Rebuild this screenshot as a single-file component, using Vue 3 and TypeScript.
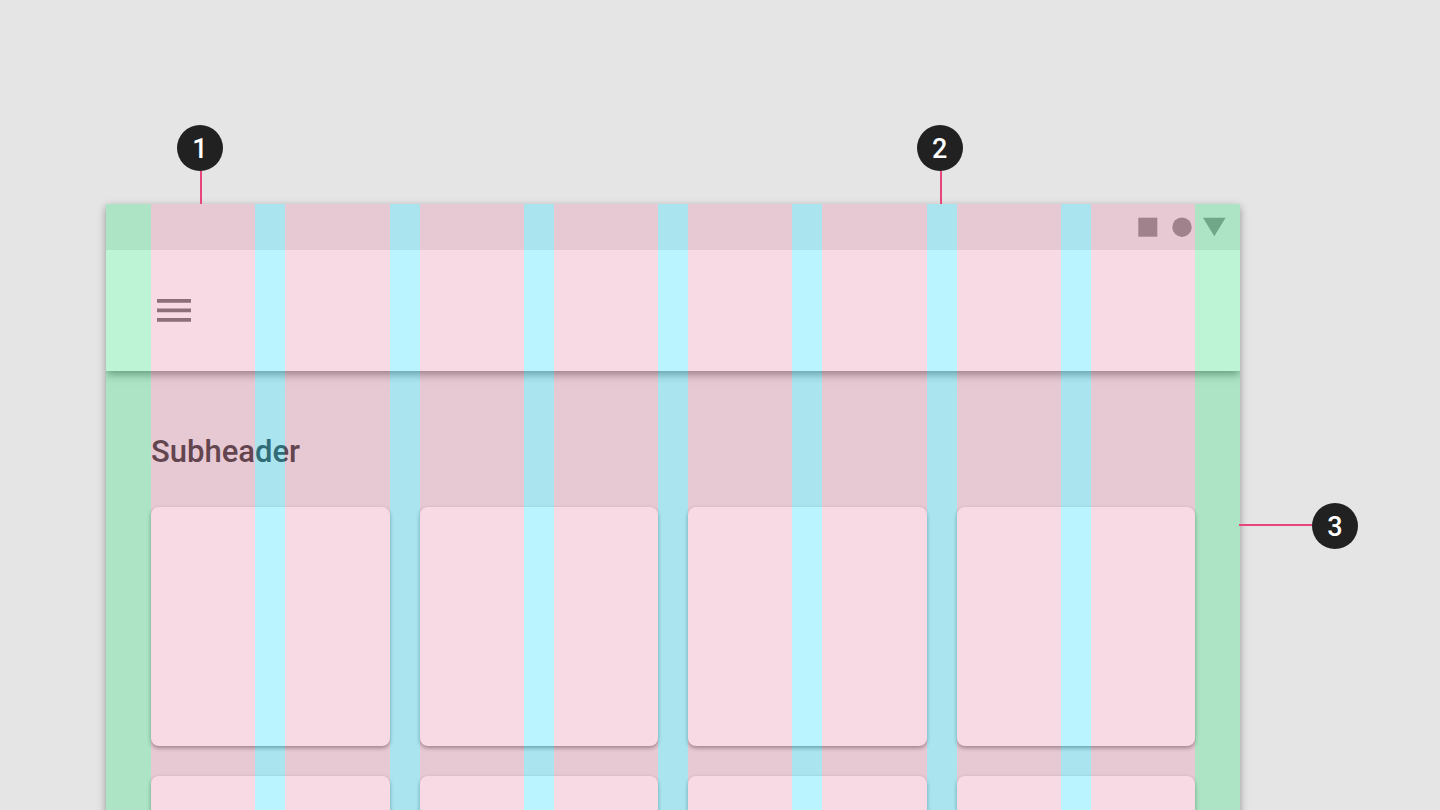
<script setup lang="ts">
interface Callout {
  id: number
  kind: 'over-column' | 'over-gutter' | 'beside-margin'
}

const callouts: Callout[] = [
  { id: 1, kind: 'over-column' },
  { id: 2, kind: 'over-gutter' },
  { id: 3, kind: 'beside-margin' },
]

const columnCount = 8
const cardCount = 8
</script>

<template>
  <div class="stage">
    <div class="device">
      <main class="screen">
        <header>
          <div class="status-bar">
            <svg class="status-icons" viewBox="0 0 88 20" aria-hidden="true">
              <path d="M0.3 0.7h19v19h-19z" />
              <circle cx="44" cy="10.2" r="9.7" />
              <path class="signal" d="M65 0.7h22.6L76.3 19.2z" />
            </svg>
          </div>
          <div class="app-bar">
            <button class="menu" type="button" aria-label="Menu">
              <svg viewBox="0 0 34 24" aria-hidden="true">
                <path d="M0 0h34v3.8H0zM0 9.5h34v3.8H0zM0 19h34v3.8H0z" />
              </svg>
            </button>
          </div>
        </header>
        <section class="content">
          <h2 class="subheader">Subheader</h2>
          <div class="cards">
            <article v-for="n in cardCount" :key="n" class="card"></article>
          </div>
        </section>
      </main>
      <div class="grid-overlay" aria-hidden="true">
        <div class="columns">
          <span v-for="n in columnCount" :key="n" class="column"></span>
        </div>
      </div>
      <div v-for="c in callouts" :key="c.id" class="callout" :class="c.kind">
        <span class="badge">{{ c.id }}</span>
        <span class="leader"></span>
      </div>
    </div>
  </div>
</template>

<style>
body {
  background: #e5e5e5;
}
</style>

<style scoped>
.stage {
  box-sizing: border-box;
  height: 100vh;
  min-height: 640px;
  overflow: hidden;
  padding: 204px 200px 0 106px;
  background: #e5e5e5;
  font-family: Roboto, "Liberation Sans", sans-serif;
}

.device {
  position: relative;
  box-shadow: 0 3px 8px rgba(0, 0, 0, 0.36);
}

.screen {
  background: #e7e7e7;
}

header {
  position: relative;
  box-shadow: 0 3px 9px rgba(0, 0, 0, 0.5);
  clip-path: inset(0 0 -24px 0);
}

.status-bar {
  display: flex;
  align-items: center;
  justify-content: flex-end;
  height: 46px;
  padding-right: 14px;
  background: #e7e7e7;
}

.status-icons {
  width: 88px;
  height: 20px;
  fill: #818181;
}

.signal {
  fill: #8a8a8a;
}

.app-bar {
  display: flex;
  align-items: center;
  height: 121px;
  padding: 0 45px;
  background: #fff;
}

.menu {
  display: flex;
  padding: 6px;
  border: 0;
  background: none;
  cursor: pointer;
}

.menu svg {
  width: 34px;
  height: 24px;
  fill: #666;
}

.content {
  padding: 60px 45px;
}

.subheader {
  margin: 0;
  padding-bottom: 34px;
  color: #2a2a2a;
  font-size: 31px;
  font-weight: 500;
  line-height: 42px;
}

.cards {
  display: grid;
  grid-template-columns: repeat(4, 1fr);
  gap: 30px;
}

.card {
  aspect-ratio: 1;
  border-radius: 8px;
  background: #fff;
  box-shadow: 0 2px 4px rgba(0, 0, 0, 0.45);
}

.grid-overlay {
  position: absolute;
  inset: 0;
  display: flex;
  pointer-events: none;
}

.grid-overlay::before,
.grid-overlay::after {
  content: "";
  width: 45px;
  background: rgba(61, 223, 134, 0.34);
}

.columns {
  flex: 1;
  display: grid;
  grid-template-columns: repeat(8, 1fr);
  gap: 30px;
}

.column {
  position: relative;
  background: rgba(232, 132, 165, 0.3);
}

.column:not(:last-child)::after {
  content: "";
  position: absolute;
  top: 0;
  bottom: 0;
  left: 100%;
  width: 30px;
  background: rgba(63, 224, 255, 0.36);
}

.callout {
  position: absolute;
  display: flex;
  align-items: center;
}

.over-column,
.over-gutter {
  bottom: 100%;
  flex-direction: column;
  width: 46px;
}

.over-column {
  left: 71px;
}

.over-gutter {
  left: 71.5%;
}

.beside-margin {
  top: 299px;
  left: calc(100% - 1px);
  flex-direction: row-reverse;
}

.badge {
  box-sizing: border-box;
  display: flex;
  align-items: center;
  justify-content: center;
  width: 46px;
  height: 46px;
  padding-top: 2px;
  border-radius: 50%;
  background: #212121;
  color: #fff;
  font-size: 27px;
  font-weight: 500;
  line-height: 32px;
}

.leader {
  width: 2px;
  height: 33px;
  margin-left: 2px;
  background: #e8457a;
}

.beside-margin .leader {
  width: 73px;
  height: 2px;
  margin: 0 0 2px;
}
</style>
